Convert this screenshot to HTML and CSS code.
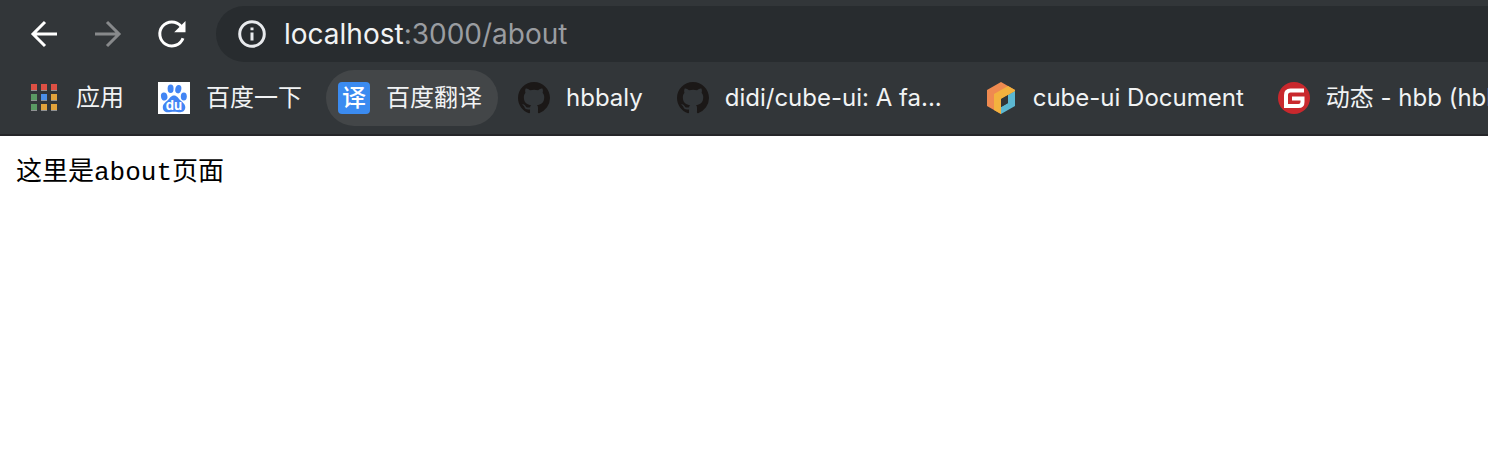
FILE: index.html
```html
<!DOCTYPE html>
<html lang="zh-CN">
<head>
<meta charset="utf-8">
<title>about</title>
<link rel="stylesheet" href="styles.css">
</head>
<body>
<header class="browser">
  <div class="toolbar">
    <nav class="controls">
      <button class="control" type="button" aria-label="Back">
        <svg viewBox="0 0 32 32"><path d="M29 16H5M17 4L5 16L17 28"/></svg>
      </button>
      <button class="control" type="button" aria-label="Forward" disabled>
        <svg viewBox="0 0 32 32"><path d="M3 16H27M15 4L27 16L15 28"/></svg>
      </button>
      <button class="control" type="button" aria-label="Reload">
        <svg viewBox="0 0 32 32"><path d="M27 20.200A12 12 0 1 1 25 8.200"/><path class="solid" d="M29.500 3V14.300H18.200Z"/></svg>
      </button>
    </nav>
    <div class="address">
      <svg class="info" viewBox="0 0 28 28"><circle cx="14" cy="14" r="12.300"/><path d="M14 12.500V20.500M14 7.500V10.300"/></svg>
      <div class="url" role="textbox" aria-label="Address">localhost<span class="path">:3000/about</span></div>
    </div>
  </div>
  <nav class="bookmarks">
    <a class="bookmark" href="#">
      <svg class="icon" viewBox="0 0 32 32">
        <g fill="#dd5044"><path d="M3 2h6v6H3zM13 2h6v6h-6zM23 2h6v6h-6z"/></g>
        <g fill="#5a9a63"><path d="M3 12h6v6H3zM3 22h6v6H3z"/></g>
        <path fill="#4b8fe8" d="M13 12h6v6h-6z"/>
        <path fill="#e2a33b" d="M23 12h6v6h-6zM13 22h6v6h-6zM23 22h6v6h-6z"/>
        <path fill="#8f9193" d="M3 8h6v1H3zM13 8h6v1h-6zM23 8h6v1h-6zM3 18h6v1H3zM13 18h6v1h-6zM23 18h6v1h-6zM3 28h6v1H3zM13 28h6v1h-6zM23 28h6v1h-6z"/>
      </svg>
      <span class="label">应用</span>
    </a>
    <a class="bookmark" href="#">
      <svg class="icon" viewBox="0 0 32 32">
        <path fill="#fff" d="M0 0h32v32H0z"/>
        <g fill="#4285f4">
          <ellipse cx="6.200" cy="14.500" rx="3.200" ry="4" transform="rotate(-12 6.200 14.500)"/>
          <ellipse cx="12.600" cy="6.800" rx="3" ry="4.200"/>
          <ellipse cx="20.300" cy="7.200" rx="3" ry="4.200" transform="rotate(12 20.300 7.200)"/>
          <ellipse cx="25.800" cy="14.600" rx="3" ry="4"/>
          <path d="M16 13.500C13 13.500 11.800 16.200 10 18C7.800 20.200 4.800 21.800 4.800 25.200C4.800 28.400 7 30.200 9.800 30.200C12.200 30.200 13.500 29.700 16 29.700S20 30.200 22.300 30.200C25.300 30.200 27.300 28.300 27.300 25.300C27.300 21.800 24.200 20.200 22 18C20.200 16.200 19 13.500 16 13.500Z"/>
        </g>
        <text class="du" x="16" y="28" text-anchor="middle">du</text>
      </svg>
      <span class="label wide">百度一下</span>
    </a>
    <a class="bookmark current" href="#">
      <span class="icon translate">译</span>
      <span class="label wide">百度翻译</span>
    </a>
    <a class="bookmark" href="#">
      <svg class="icon github" viewBox="0 0 16 16"><path d="M8 0C3.580 0 0 3.580 0 8c0 3.540 2.290 6.530 5.470 7.590.4.070.55-.17.55-.38 0-.19-.01-.82-.01-1.490-2.010.37-2.530-.49-2.690-.94-.09-.23-.48-.94-.82-1.130-.28-.15-.68-.52-.01-.53.63-.01 1.080.58 1.230.82.72 1.210 1.870.87 2.330.66.07-.52.28-.87.51-1.070-1.780-.2-3.640-.89-3.640-3.950 0-.87.31-1.590.82-2.150-.08-.2-.36-1.020.08-2.120 0 0 .67-.21 2.200.82.64-.18 1.320-.27 2-.27s1.360.09 2 .27c1.530-1.040 2.200-.82 2.200-.82.44 1.100.16 1.920.08 2.120.51.56.82 1.270.82 2.150 0 3.070-1.870 3.750-3.650 3.950.29.25.54.73.54 1.480 0 1.070-.01 1.930-.01 2.200 0 .21.15.46.55.38A8.010 8.010 0 0 0 16 8c0-4.420-3.580-8-8-8z"/></svg>
      <span class="label">hbbaly</span>
    </a>
    <a class="bookmark" href="#">
      <svg class="icon github" viewBox="0 0 16 16"><path d="M8 0C3.580 0 0 3.580 0 8c0 3.540 2.290 6.530 5.470 7.590.4.070.55-.17.55-.38 0-.19-.01-.82-.01-1.490-2.010.37-2.530-.49-2.690-.94-.09-.23-.48-.94-.82-1.130-.28-.15-.68-.52-.01-.53.63-.01 1.080.58 1.230.82.72 1.210 1.870.87 2.330.66.07-.52.28-.87.51-1.070-1.780-.2-3.640-.89-3.640-3.950 0-.87.31-1.590.82-2.150-.08-.2-.36-1.020.08-2.120 0 0 .67-.21 2.200.82.64-.18 1.320-.27 2-.27s1.360.09 2 .27c1.530-1.040 2.200-.82 2.200-.82.44 1.100.16 1.920.08 2.120.51.56.82 1.270.82 2.150 0 3.070-1.870 3.750-3.650 3.950.29.25.54.73.54 1.480 0 1.070-.01 1.930-.01 2.200 0 .21.15.46.55.38A8.010 8.010 0 0 0 16 8c0-4.420-3.580-8-8-8z"/></svg>
      <span class="label long">didi/cube-ui: A fa...</span>
    </a>
    <a class="bookmark" href="#">
      <svg class="icon" viewBox="0 0 32 32">
        <path fill="#ef8a50" d="M16 0L30 8L16 16V32L2 24V8Z"/>
        <path fill="#f3b23e" d="M9 12L23 4L30 8V9L16 17V32L9 28Z"/>
        <path fill="#5cb8d2" d="M30 9V24L16 32V25L23 21V13Z"/>
        <path fill="#f3b23e" d="M16 16L30 8V9L23 13L16 17Z"/>
        <path fill="#323639" d="M16 17L23 13V21L16 25Z"/>
      </svg>
      <span class="label">cube-ui Document</span>
    </a>
    <a class="bookmark" href="#">
      <svg class="icon" viewBox="0 0 32 32"><circle cx="16" cy="16" r="16" fill="#c9282d"/><path class="gitee" d="M26 8.500H12.500Q8 8.500 8 13V24H20.500Q24.500 24 24.500 20V16.500H14"/></svg>
      <span class="label">动态 - hbb (hbb</span>
    </a>
  </nav>
</header>
<main class="page">这里是about页面</main>
</body>
</html>
```
FILE: styles.css
```css
* {
  box-sizing: border-box;
}

body {
  margin: 0;
  background: #fff;
  color: #000;
}

.browser {
  background: #323639;
  border-bottom: 2px solid #252629;
  overflow: hidden;
  font-family: Inter, "Noto Sans CJK SC", sans-serif;
}

.toolbar {
  display: flex;
  align-items: center;
  padding-top: 6px;
}

.controls {
  display: flex;
  gap: 32px;
  padding: 0 28px;
}

.control {
  width: 32px;
  height: 32px;
  padding: 0;
  border: 0;
  background: none;
  color: #fff;
}

.control:disabled {
  color: #87898b;
}

.control svg {
  display: block;
  fill: none;
  stroke: currentColor;
  stroke-width: 3;
}

.control .solid {
  fill: currentColor;
  stroke: none;
}

.address {
  flex: 1;
  display: flex;
  align-items: center;
  gap: 18px;
  height: 56px;
  padding-left: 22px;
  border-radius: 28px 0 0 28px;
  background: #282c2f;
}

.info {
  width: 28px;
  height: 28px;
  fill: none;
  stroke: #e8eaed;
  stroke-width: 3;
}

.url {
  color: #f1f3f4;
  font-size: 28px;
  line-height: 36px;
}

.path {
  color: #9a9da1;
}

.bookmarks {
  display: flex;
  gap: 8px;
  padding: 8px 0 8px 16px;
}

.bookmark {
  display: flex;
  flex: none;
  align-items: center;
  gap: 16px;
  height: 56px;
  padding: 0 14px 0 12px;
  border-radius: 28px;
  color: #f1f3f4;
  font-size: 24px;
  line-height: 32px;
  text-decoration: none;
  white-space: nowrap;
}

.current {
  background: #434648;
}

.icon {
  width: 32px;
  height: 32px;
}

.wide {
  width: 98px;
}

.long {
  width: 226px;
}

.github {
  fill: #1b1817;
}

.translate {
  border-radius: 4px;
  background: #3b8bf0;
  color: #fff;
  font-weight: 500;
  text-align: center;
}

.du {
  fill: #fff;
  font-size: 13px;
  font-weight: 700;
}

.gitee {
  fill: none;
  stroke: #fff;
  stroke-width: 4;
}

.page {
  padding: 18px 16px;
  font-family: "Courier New", "Liberation Mono", "Noto Sans CJK SC", monospace;
  font-size: 26px;
  line-height: 38px;
}
```
